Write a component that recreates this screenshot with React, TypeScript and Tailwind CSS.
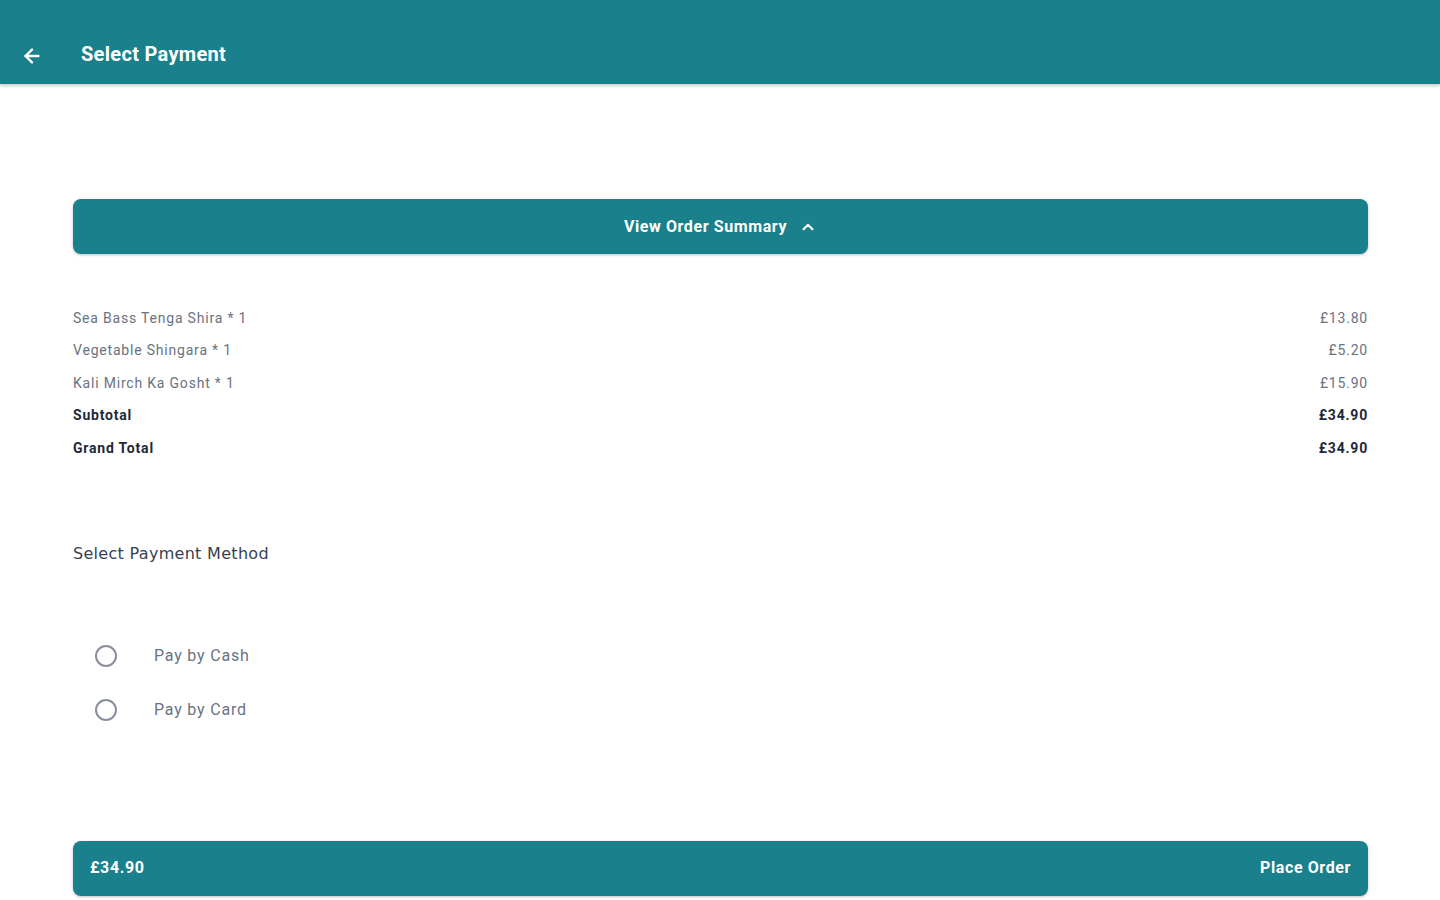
import { ArrowLeft, ChevronUp } from 'lucide-react'

const items = [
  { name: 'Sea Bass Tenga Shira * 1', price: '£13.80' },
  { name: 'Vegetable Shingara * 1', price: '£5.20' },
  { name: 'Kali Mirch Ka Gosht * 1', price: '£15.90' },
]

export default function App() {
  return (
    <div className="min-h-screen bg-white font-['Roboto',sans-serif]">
      {/* Header */}
      <div className="h-[84px] bg-[#1a808b] shadow-[0_2px_3px_rgba(0,0,0,0.2)] flex items-end pb-[15px]">
        <button className="ml-[20px] w-6 h-6 flex items-center justify-center text-white -translate-y-px">
          <ArrowLeft size={22} strokeWidth={2.6} />
        </button>
        <h1 className="ml-[37px] text-[20px] font-bold text-white tracking-[0.3px]">Select Payment</h1>
      </div>

      <div className="px-[73px] pr-[72px]">
        {/* Order Summary toggle */}
        <button className="mt-[115px] w-full h-[55px] bg-[#1a808b] rounded-lg shadow-[0_1px_3px_rgba(0,0,0,0.25)] flex items-center justify-center gap-3 text-white text-[16px] font-bold tracking-[0.6px]">
          View Order Summary
          <ChevronUp size={18} strokeWidth={2.6} />
        </button>

        {/* Items */}
        <div className="mt-[48px] flex flex-col">
          {items.map((item) => (
            <div key={item.name} className="h-[32.5px] flex items-center justify-between text-[14px] tracking-[0.8px] text-gray-500">
              <span>{item.name}</span>
              <span>{item.price}</span>
            </div>
          ))}
          <div className="h-[32.5px] flex items-center justify-between text-[14px] tracking-[0.8px] font-bold text-gray-800">
            <span>Subtotal</span>
            <span>£34.90</span>
          </div>
          <div className="h-[32.5px] flex items-center justify-between text-[14px] tracking-[0.8px] font-bold text-gray-800">
            <span>Grand Total</span>
            <span>£34.90</span>
          </div>
        </div>

        {/* Payment method */}
        <p className="mt-[77px] text-[16px] tracking-[0.3px] text-gray-700 font-['DejaVu_Sans',sans-serif]">
          Select Payment Method
        </p>

        <div className="mt-[78px] flex flex-col gap-[30px] pl-[22px]">
          {['Pay by Cash', 'Pay by Card'].map((label) => (
            <label key={label} className="flex items-center h-6 cursor-pointer">
              <span className="w-[22px] h-[22px] rounded-full border-2 border-gray-500/80" />
              <span className="ml-[37px] text-[16px] tracking-[0.8px] text-gray-500">{label}</span>
            </label>
          ))}
        </div>

        {/* Bottom bar */}
        <button className="mt-[119px] w-full h-[55px] bg-[#1a808b] rounded-lg shadow-[0_1px_3px_rgba(0,0,0,0.25)] flex items-center justify-between px-[17px] text-white text-[16px] font-bold tracking-[0.6px]">
          <span>£34.90</span>
          <span>Place Order</span>
        </button>
      </div>
    </div>
  )
}
